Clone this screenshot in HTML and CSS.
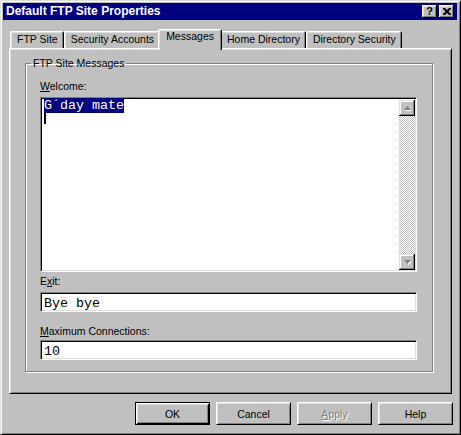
FILE: index.html
```html
<!DOCTYPE html>
<html lang="en">
  <head>
    <meta charset="UTF-8" />
    <title>Default FTP Site Properties</title>
    <link rel="stylesheet" href="styles.css">
  </head>
  <body>
    <div class="window">
      <div class="titlebar">
        <span class="title">Default FTP Site Properties</span>
        <div class="capbtns">
          <div class="capbtn help">?</div>
          <div class="capbtn">
            <svg width="8" height="7" viewBox="0 0 8 7">
              <path d="M0 0h2l2 2 2-2h2v1l-2.5 2.5 2.5 2.5v1h-2l-2-2-2 2h-2v-1l2.5-2.5-2.5-2.5z" fill="#000"/>
            </svg>
          </div>
        </div>
      </div>

      <ul class="tabs">
        <li class="tab">FTP Site</li>
        <li class="tab">Security Accounts</li>
        <li class="tab active">Messages</li>
        <li class="tab">Home Directory</li>
        <li class="tab">Directory Security</li>
      </ul>

      <div class="panel">
        <fieldset class="group">
          <legend>FTP Site Messages</legend>
          <div class="groupbody">
            <div class="label"><u>W</u>elcome:</div>
            <div class="memo">
              <div class="memotext">
                <span class="sel">G´day mate</span>
                <div class="caret"></div>
              </div>
              <div class="vscroll">
                <div class="sbtn">
                  <svg width="7" height="5" viewBox="0 0 7 5">
                    <path d="M1 5h7l-3.5-4z" fill="#fff"/>
                    <path d="M0 4h7l-3.5-4z" fill="#808080"/>
                  </svg>
                </div>
                <div class="track"></div>
                <div class="sbtn">
                  <svg width="7" height="5" viewBox="0 0 7 5">
                    <path d="M1 1h7l-3.5 4z" fill="#fff"/>
                    <path d="M0 0h7l-3.5 4z" fill="#808080"/>
                  </svg>
                </div>
              </div>
            </div>
            <div class="label exit">E<u>x</u>it:</div>
            <div class="field">Bye bye</div>
            <div class="label maxc"><u>M</u>aximum Connections:</div>
            <div class="field max">10</div>
          </div>
        </fieldset>
      </div>

      <div class="buttons">
        <button class="btn default">OK</button>
        <button class="btn">Cancel</button>
        <button class="btn disabled"><u>A</u>pply</button>
        <button class="btn">Help</button>
      </div>
    </div>
  </body>
</html>
```

FILE: styles.css
```css
* {
  box-sizing: border-box;
  margin: 0;
}

body {
  background: #c0c0c0;
  font-family: "Liberation Sans", Arial, sans-serif;
  font-size: 10.5px;
  color: #000;
}

/* ---- window frame ---- */
.window {
  width: 461px;
  height: 435px;
  padding: 2px;
  background: #c0c0c0;
  border: 1px solid;
  border-color: #dfdfdf #000 #000 #dfdfdf;
  box-shadow: inset 1px 1px #fff, inset -1px -1px #808080;
  display: flex;
  flex-direction: column;
}

.titlebar {
  height: 17px;
  margin-right: 1px;
  padding: 0 3px 0 3px;
  background: #000080;
  color: #fff;
  display: flex;
  align-items: center;
  justify-content: space-between;
}

.title {
  font-weight: bold;
  font-size: 12px;
  line-height: 17px;
}

.capbtns {
  display: flex;
  gap: 2px;
}

.capbtn {
  width: 15px;
  height: 13px;
  background: #c0c0c0;
  color: #000;
  box-shadow: inset -1px -1px #000, inset 1px 1px #fff, inset -2px -2px #808080, inset 2px 2px #dfdfdf;
  display: flex;
  align-items: center;
  justify-content: center;
}

.capbtn.help {
  font-weight: bold;
  font-size: 11px;
  line-height: 13px;
}

/* ---- tabs ---- */
.tabs {
  list-style: none;
  padding: 0 0 0 7px;
  margin-top: 9px;
  height: 19px;
  display: flex;
  align-items: flex-start;
}

.tab {
  margin-top: 2px;
  height: 17px;
  padding: 0 5px 0 6px;
  line-height: 15px;
  white-space: nowrap;
  border: 1px solid;
  border-bottom: none;
  border-color: #fff #000 #fff #fff;
  border-radius: 2px 2px 0 0;
  box-shadow: inset -1px 0 #808080, inset 1px 1px #dfdfdf;
}

.tab.active {
  position: relative;
  z-index: 1;
  margin: 0 -2px;
  height: 21px;
  padding: 0 7px;
  line-height: 13px;
  background: #c0c0c0;
}

/* ---- panel ---- */
.panel {
  margin: 0 6px 0 6px;
  height: 346px;
  padding: 1px;
  border: 1px solid;
  border-color: #fff #000 #000 #fff;
  box-shadow: inset 1px 1px #dfdfdf, inset -1px -1px #808080;
}

.group {
  width: 408px;
  min-width: 0;
  margin: 7px 0 0 14px;
  padding: 0;
  border: 1px solid #808080;
  box-shadow: inset 1px 1px #fff, 1px 1px #fff;
}

.group legend {
  margin-left: 5px;
  padding: 0 2px;
  line-height: 13px;
}

.groupbody {
  padding: 10px 15px 11px 14px;
}

.label {
  line-height: 13px;
  height: 13px;
}

.label.exit {
  margin-top: 3px;
}

.label.maxc {
  margin-top: 13px;
}

/* sunken fields */
.memo,
.field {
  background: #fff;
  border: 1px solid;
  border-color: #808080 #fff #fff #808080;
  box-shadow: inset 1px 1px #000, inset -1px -1px #dfdfdf;
}

.memo {
  margin-top: 4px;
  height: 175px;
  padding: 2px 1px 1px 2px;
  display: flex;
}

.memotext {
  flex: 1;
  padding-left: 1px;
  font-family: "Liberation Mono", "Courier New", monospace;
  font-size: 13.33px;
  line-height: 12px;
}

.sel {
  background: #000080;
  color: #fff;
}

.caret {
  width: 2px;
  height: 12px;
  background: #000;
}

.vscroll {
  width: 16px;
  display: flex;
  flex-direction: column;
}

.sbtn {
  height: 16px;
  background: #c0c0c0;
  box-shadow: inset -1px -1px #000, inset 1px 1px #dfdfdf, inset -2px -2px #808080, inset 2px 2px #fff;
  display: flex;
  align-items: center;
  justify-content: center;
}

.track {
  flex: 1;
  background: repeating-conic-gradient(#c0c0c0 0 25%, #fff 0 50%) 0 0 / 2px 2px;
}

.field {
  margin-top: 4px;
  height: 20px;
  padding: 4px 3px 0 3px;
  font-family: "Liberation Mono", "Courier New", monospace;
  font-size: 13.33px;
  line-height: 14px;
}

.field.max {
  margin-top: 2px;
}

/* ---- dialog buttons ---- */
.buttons {
  margin-top: 8px;
  padding-right: 5px;
  display: flex;
  justify-content: flex-end;
  gap: 6px;
}

.btn {
  width: 75px;
  height: 23px;
  padding: 0;
  font-family: "Liberation Sans", Arial, sans-serif;
  font-size: 10.5px;
  color: #000;
  background: #c0c0c0;
  border: 1px solid;
  border-color: #fff #000 #000 #fff;
  box-shadow: inset 1px 1px #dfdfdf, inset -1px -1px #808080;
}

.btn.default {
  border-color: #000;
  box-shadow: inset 1px 1px #fff, inset -1px -1px #000, inset 2px 2px #dfdfdf, inset -2px -2px #808080;
}

.btn.disabled {
  color: #808080;
  text-shadow: 1px 1px #fff;
}
```
